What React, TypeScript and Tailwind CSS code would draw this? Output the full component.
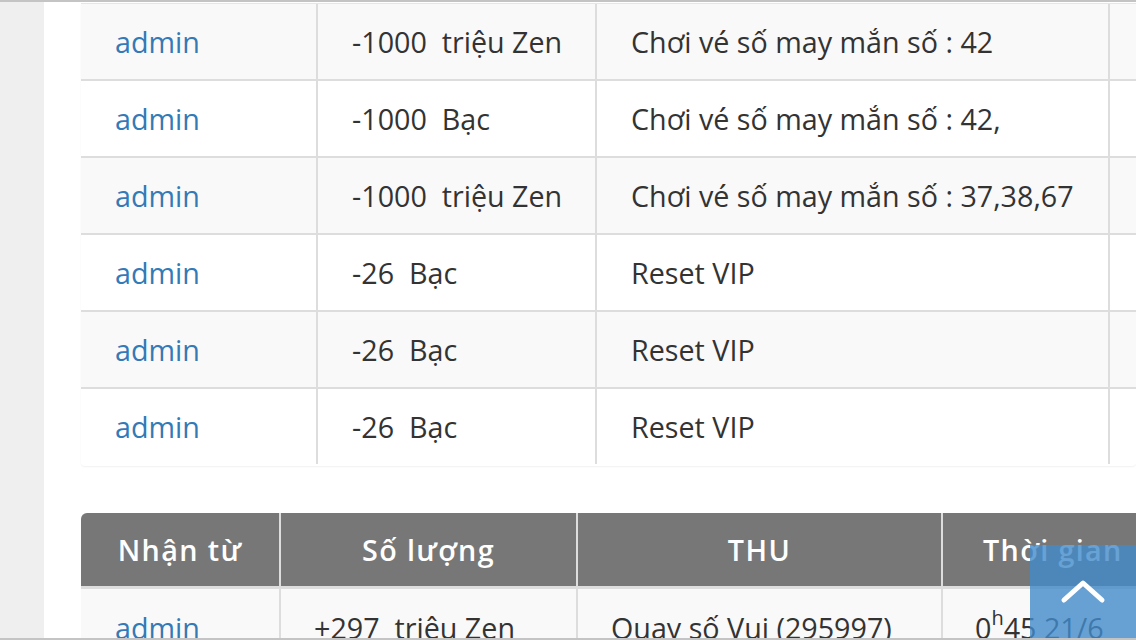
import React from 'react';

interface SpendRow {
  user: string;
  amount: string;
  note: string;
}

const spendRows: SpendRow[] = [
  { user: 'admin', amount: '-1000  triệu Zen', note: 'Chơi vé số may mắn số : 42' },
  { user: 'admin', amount: '-1000  Bạc', note: 'Chơi vé số may mắn số : 42,' },
  { user: 'admin', amount: '-1000  triệu Zen', note: 'Chơi vé số may mắn số : 37,38,67' },
  { user: 'admin', amount: '-26  Bạc', note: 'Reset VIP' },
  { user: 'admin', amount: '-26  Bạc', note: 'Reset VIP' },
  { user: 'admin', amount: '-26  Bạc', note: 'Reset VIP' },
];

export default function App() {
  return (
    <div
      className="relative w-[1136px] h-[640px] overflow-hidden bg-white border-t-2 border-b-2 border-[#c4c4c4] text-[28.7px] text-[#333]"
      style={{ fontFamily: '"Open Sans", "Noto Sans", sans-serif' }}
    >
      <div className="flex h-full">
        {/* grey page gutter */}
        <div className="w-[44px] shrink-0 bg-[#efefef]" />

        <div className="flex-1 pl-[37px] pt-[1px]">
          {/* Spending table */}
          <div className="border-t border-[#e6e6e6] rounded-b-[4px] shadow-[0_1px_2px_rgba(0,0,0,0.06)] overflow-hidden pb-[2px]">
            {spendRows.map((row, i) => (
              <div
                key={i}
                className={
                  'flex whitespace-pre ' +
                  (i % 2 === 0 ? 'bg-[#f9f9f9] ' : 'bg-white ') +
                  (i < spendRows.length - 1 ? 'h-[77px] border-b-2 border-[#dddddd]' : 'h-[75px]')
                }
              >
                <div className="w-[237px] shrink-0 flex items-center pl-[34px] border-r-2 border-[#dddddd] text-[#337ab7]">
                  {row.user}
                </div>
                <div className="w-[279px] shrink-0 flex items-center pl-[34px] border-r-2 border-[#dddddd]">
                  {row.amount}
                </div>
                <div className="w-[513px] shrink-0 flex items-center pl-[34px] border-r-2 border-[#dddddd]">
                  {row.note}
                </div>
                <div className="flex-1" />
              </div>
            ))}
          </div>

          {/* Receive table */}
          <div className="mt-[47px]">
            <div className="flex h-[76px] bg-[#777777] rounded-tl-[6px] text-white font-semibold tracking-[1.4px] border-b-[3px] border-[#dddddd]">
              <div className="w-[200px] shrink-0 flex items-center justify-center border-r-2 border-[#dddddd]">
                Nhận từ
              </div>
              <div className="w-[297px] shrink-0 flex items-center justify-center border-r-2 border-[#dddddd]">
                Số lượng
              </div>
              <div className="w-[365px] shrink-0 flex items-center justify-center border-r-2 border-[#dddddd]">
                THU
              </div>
              <div className="flex-1 flex items-center pl-[40px] whitespace-nowrap">Thời gian</div>
            </div>
            <div className="flex h-[77px] bg-[#f9f9f9] whitespace-pre">
              <div className="w-[200px] shrink-0 flex items-center pl-[34px] border-r-2 border-[#dddddd] text-[#337ab7]">
                admin
              </div>
              <div className="w-[297px] shrink-0 flex items-center pl-[33px] border-r-2 border-[#dddddd]">
                +297  triệu Zen
              </div>
              <div className="w-[365px] shrink-0 flex items-center pl-[33px] border-r-2 border-[#dddddd]">
                Quay số Vui (295997)
              </div>
              <div className="flex-1 flex items-center pl-[32px] whitespace-nowrap">
                0<sup className="text-[20px]">h</sup>45 21/6
              </div>
            </div>
          </div>
        </div>
      </div>

      {/* back to top */}
      <div className="absolute left-[1030px] top-[543px] w-[106px] h-[97px] bg-[rgba(66,139,202,0.8)]">
        <svg width="106" height="97" viewBox="0 0 106 97" className="block">
          <polyline
            points="34,55 53,38 72,55"
            fill="none"
            stroke="white"
            strokeWidth="5"
            strokeLinecap="round"
            strokeLinejoin="round"
          />
        </svg>
      </div>
    </div>
  );
}
